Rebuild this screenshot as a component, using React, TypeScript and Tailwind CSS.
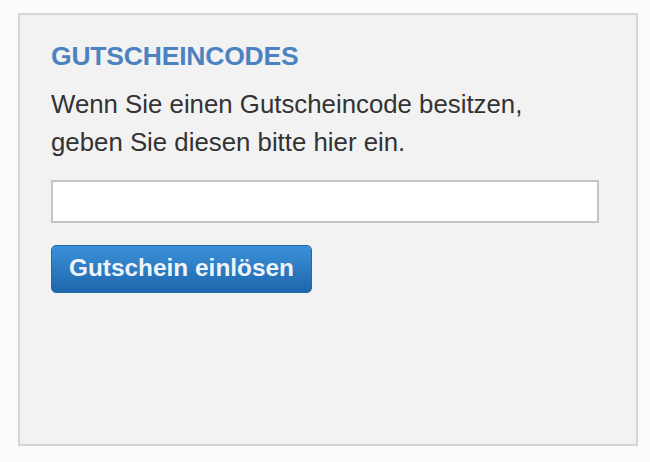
export default function App() {
  return (
    <div className="w-[650px] h-[462px] bg-[#fbfbfb] pt-[13px] pl-[18px]" style={{ fontFamily: '"Liberation Sans", Arial, sans-serif' }}>
      <div className="w-[620px] h-[433px] border-2 border-[#d6d6d6] bg-[#f2f2f2] pt-[26px] pl-[31px]">
        <h2 className="text-[26.5px] leading-[30px] font-bold text-[#4d82c2] tracking-[-0.2px]">GUTSCHEINCODES</h2>
        <p className="mt-[14px] text-[25.8px] leading-[38px] text-[#333333]">
          Wenn Sie einen Gutscheincode besitzen,
          <br />
          geben Sie diesen bitte hier ein.
        </p>
        <input
          type="text"
          className="block mt-[19px] w-[548px] h-[43px] bg-white border-2 border-[#c4c4c4] outline-none"
        />
        <button
          type="button"
          className="mt-[22px] w-[261px] h-[48px] rounded-[5px] bg-gradient-to-b from-[#3b91d8] to-[#1e66ad] border border-[#2468a8] flex justify-center pt-[8px] text-[24.4px] leading-[28px] font-bold text-[#eef4fa]"
        >
          Gutschein einlösen
        </button>
      </div>
    </div>
  );
}
